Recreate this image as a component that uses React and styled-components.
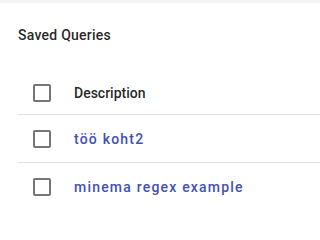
import React from "react";
import styled, { createGlobalStyle } from "styled-components";

const Global = createGlobalStyle`
  html, body { margin: 0; padding: 0; background: #fff; }
  body { font-family: Roboto, "Liberation Sans", sans-serif; }
`;

const TopShade = styled.div`
  height: 3px;
  background: #f5f5f5;
`;

const Panel = styled.section`
  padding-left: 18px;
`;

const Title = styled.h2`
  margin: 0;
  padding-top: 21px;
  height: 22px;
  line-height: 22px;
  font-size: 14px;
  font-weight: 500;
  letter-spacing: 0.25px;
  color: rgba(0, 0, 0, 0.87);
`;

const Table = styled.div`
  margin-top: 25px;
  display: flex;
  flex-direction: column;
`;

const Row = styled.div`
  display: flex;
  align-items: center;
  height: ${(p) => (p.$head ? 44 : 48)}px;
  border-bottom: ${(p) => (p.$last ? "none" : "1px solid #e0e0e0")};
  box-sizing: border-box;
`;

const BoxCell = styled.div`
  width: 56px;
  display: flex;
  align-items: center;
  padding-left: 12px;
  box-sizing: border-box;
  color: rgba(0, 0, 0, 0.54);
`;

const HeadText = styled.span`
  font-size: 14px;
  font-weight: 500;
  color: rgba(0, 0, 0, 0.87);
`;

const LinkText = styled.span`
  font-size: 14px;
  font-weight: 500;
  letter-spacing: 1.2px;
  color: #3f51b5;
`;

const Check = () => (
  <svg width="24" height="24" viewBox="0 0 24 24" fill="currentColor">
    <path d="M19 5v14H5V5h14m0-2H5c-1.11 0-2 .9-2 2v14c0 1.1.89 2 2 2h14c1.1 0 2-.9 2-2V5c0-1.1-.9-2-2-2z" />
  </svg>
);

const rows = ["töö koht2", "minema regex example"];

export default function App() {
  return (
    <>
      <Global />
      <TopShade />
      <Panel>
        <Title>Saved Queries</Title>
        <Table>
          <Row $head>
            <BoxCell><Check /></BoxCell>
            <HeadText>Description</HeadText>
          </Row>
          {rows.map((r, i) => (
            <Row key={r} $last={i === rows.length - 1}>
              <BoxCell><Check /></BoxCell>
              <LinkText>{r}</LinkText>
            </Row>
          ))}
        </Table>
      </Panel>
    </>
  );
}
